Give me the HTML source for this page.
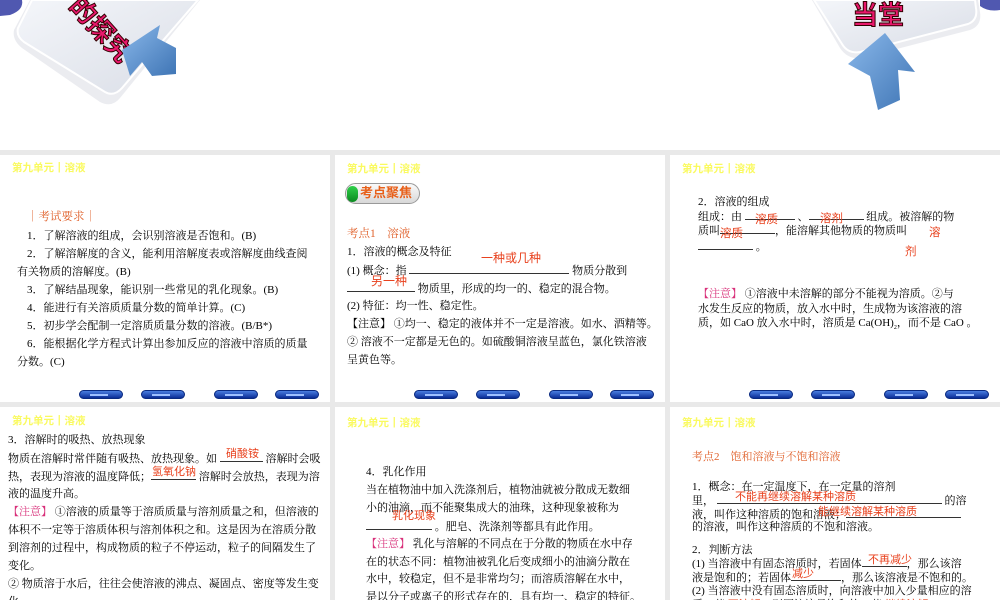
<!DOCTYPE html>
<html><head><meta charset="utf-8"><style>
*{margin:0;padding:0;box-sizing:border-box}
body{width:1000px;height:600px;overflow:hidden;background:#e9e9e9;position:relative;font-family:"Liberation Serif","Noto Serif CJK SC",serif;font-size:11px;color:#000}
.top{position:absolute;left:0;top:0;width:1000px;height:150px;background:#fff}
.p{position:absolute;background:#fff;overflow:hidden}
.l{position:absolute;white-space:nowrap;line-height:14px}
.h{color:#fafa60;font-family:"Liberation Sans","Noto Sans CJK SC",sans-serif;font-size:10.5px;font-weight:bold}
.o{color:#e0602a}
.r{color:#e8401c;font-family:"Liberation Sans","Noto Sans CJK SC",sans-serif}
.m{color:#d8307a}
.u{display:inline-block;border-bottom:1px solid #333;height:11px;vertical-align:baseline}
.b{position:absolute;top:235px;width:44px;height:9px;border-radius:5px;background:linear-gradient(#4a7ee0,#0a2c96);border:1px solid #0a2a80}
.b:after{content:"";position:absolute;left:10px;top:3px;width:18px;height:2px;background:#9ec0ff}
</style></head><body>
<div class="top">
<svg width="1000" height="150" style="position:absolute;left:0;top:0">
<defs><linearGradient id="t" x1="0" y1="0" x2="1" y2="1"><stop offset="0" stop-color="#f4f6fa"/><stop offset="1" stop-color="#d9dde6"/></linearGradient>
<linearGradient id="a" x1="0" y1="0" x2="1" y2="1"><stop offset="0" stop-color="#8ab8ea"/><stop offset="1" stop-color="#3f75b5"/></linearGradient></defs>
<path d="M30 0 L14 30 Q12 40 22 48 L100 102 Q112 108 120 98 L200 0 Z" fill="#e2e4ea" opacity=".7"/>
<path d="M32 0 L18 28 Q16 36 24 42 L105 92 Q114 97 122 88 L198 0 Z" fill="url(#t)" stroke="#fff" stroke-width="2"/>
<path d="M0 0 L22 0 Q24 10 10 15 L0 16 Z" fill="#5058b0"/>
<text x="62" y="20" transform="rotate(48 80 20)" font-family="Liberation Sans,Noto Sans CJK SC,sans-serif" font-size="26" font-weight="bold" fill="#e8186c" stroke="#300" stroke-width="1">的探究</text>
<path d="M122 50 L160 25 L157 38 L176 48 L176 74 L152 76 L142 62 L130 76 Z" fill="url(#a)"/>
<path d="M812 0 L840 48 Q848 60 862 58 L970 30 Q982 26 980 12 L978 0 Z" fill="#e2e4ea" opacity=".7"/>
<path d="M814 0 L842 44 Q848 54 860 52 L968 24 Q978 20 976 8 L975 0 Z" fill="url(#t)" stroke="#fff" stroke-width="2"/>
<path d="M980 0 L1000 0 L1000 10 Q988 12 980 6 Z" fill="#5058b0"/>
<text x="852" y="24" font-family="Liberation Sans,Noto Sans CJK SC,sans-serif" font-size="26" font-weight="bold" fill="#e8186c" stroke="#300" stroke-width="1">当堂</text>
<path d="M885 33 L915 72 L898 70 L900 100 L878 110 L870 76 L848 64 Z" fill="url(#a)"/>
</svg>
</div>

<div class="p" style="left:0;top:155px;width:330px;height:247px">
<div class="l h" style="left:12px;top:6px">第九单元┃溶液</div>
<div class="l o" style="left:27px;top:55px;font-size:11.5px">｜考试要求｜</div>
<div class="l" style="left:27px;top:74px">1．了解溶液的组成，会识别溶液是否饱和。(B)</div>
<div class="l" style="left:27px;top:92px">2．了解溶解度的含义，能利用溶解度表或溶解度曲线查阅</div>
<div class="l" style="left:17px;top:110px">有关物质的溶解度。(B)</div>
<div class="l" style="left:27px;top:128px">3．了解结晶现象，能识别一些常见的乳化现象。(B)</div>
<div class="l" style="left:27px;top:146px">4．能进行有关溶质质量分数的简单计算。(C)</div>
<div class="l" style="left:27px;top:164px">5．初步学会配制一定溶质质量分数的溶液。(B/B*)</div>
<div class="l" style="left:27px;top:182px">6．能根据化学方程式计算出参加反应的溶液中溶质的质量</div>
<div class="l" style="left:17px;top:200px">分数。(C)</div>
<div class="b" style="left:79px"></div><div class="b" style="left:141px"></div><div class="b" style="left:214px"></div><div class="b" style="left:275px"></div>
</div>

<div class="p" style="left:335px;top:155px;width:330px;height:247px">
<div class="l h" style="left:12px;top:7px">第九单元┃溶液</div>
<div style="position:absolute;left:10px;top:28px;width:75px;height:21px;border-radius:11px;background:linear-gradient(#fafafa,#d8d8d8);border:1px solid #999"></div>
<div style="position:absolute;left:12px;top:31px;width:11px;height:16px;border-radius:6px;background:linear-gradient(#2fd04a,#0a8a20)"></div>
<div class="l" style="left:25px;top:31px;color:#e8601a;font-family:'Liberation Sans','Noto Sans CJK SC',sans-serif;font-weight:bold;font-size:13px">考点聚焦</div>
<div class="l o" style="left:12px;top:72px;font-size:11.5px">考点1　溶液</div>
<div class="l" style="left:12px;top:90px">1．溶液的概念及特征</div>
<div class="l r" style="left:146px;top:96px;font-size:12px">一种或几种</div>
<div class="l" style="left:12px;top:108px">(1) 概念：指 <span class="u" style="width:160px"></span> 物质分散到</div>
<div class="l r" style="left:36px;top:119px;font-size:12px">另一种</div>
<div class="l" style="left:12px;top:126px"><span class="u" style="width:68px"></span> 物质里，形成的均一的、稳定的混合物。</div>
<div class="l" style="left:12px;top:144px">(2) 特征：均一性、稳定性。</div>
<div class="l" style="left:12px;top:162px">【注意】 ①均一、稳定的液体并不一定是溶液。如水、酒精等。</div>
<div class="l" style="left:12px;top:180px">② 溶液不一定都是无色的。如硫酸铜溶液呈蓝色，氯化铁溶液</div>
<div class="l" style="left:12px;top:198px">呈黄色等。</div>
<div class="b" style="left:79px"></div><div class="b" style="left:141px"></div><div class="b" style="left:214px"></div><div class="b" style="left:275px"></div>
</div>

<div class="p" style="left:670px;top:155px;width:330px;height:247px">
<div class="l h" style="left:12px;top:7px">第九单元┃溶液</div>
<div class="l" style="left:28px;top:40px">2．溶液的组成</div>
<div class="l" style="left:28px;top:54px">组成：由 <span class="u" style="width:50px"></span> 、<span class="u" style="width:55px"></span> 组成。被溶解的物</div>
<div class="l r" style="left:85px;top:58px;font-size:11.5px">溶质</div>
<div class="l r" style="left:150px;top:57px;font-size:11.5px">溶剂</div>
<div class="l" style="left:28px;top:68px">质叫<span class="u" style="width:55px"></span>，能溶解其他物质的物质叫</div>
<div class="l r" style="left:50px;top:72px;font-size:11.5px">溶质</div>
<div class="l" style="left:28px;top:84px"><span class="u" style="width:55px"></span> 。</div>
<div class="l r" style="left:259px;top:71px;font-size:11.5px">溶</div>
<div class="l r" style="left:235px;top:90px;font-size:11.5px">剂</div>
<div class="l" style="left:28px;top:132px"><span class="m">【注意】</span> ①溶液中未溶解的部分不能视为溶质。②与</div>
<div class="l" style="left:28px;top:147px">水发生反应的物质，放入水中时，生成物为该溶液的溶</div>
<div class="l" style="left:28px;top:161px">质，如 CaO 放入水中时，溶质是 Ca(OH)<sub style="font-size:6px">2</sub>，而不是 CaO 。</div>
<div class="b" style="left:79px"></div><div class="b" style="left:141px"></div><div class="b" style="left:214px"></div><div class="b" style="left:275px"></div>
</div>

<div class="p" style="left:0;top:407px;width:330px;height:193px">
<div class="l h" style="left:12px;top:7px">第九单元┃溶液</div>
<div class="l" style="left:8px;top:26px">3．溶解时的吸热、放热现象</div>
<div class="l" style="left:8px;top:44px">物质在溶解时常伴随有吸热、放热现象。如 <span class="u" style="width:43px"></span> 溶解时会吸</div>
<div class="l r" style="left:226px;top:40px">硝酸铵</div>
<div class="l" style="left:8px;top:62px">热，表现为溶液的温度降低；<span class="u" style="width:45px"></span> 溶解时会放热，表现为溶</div>
<div class="l r" style="left:152px;top:58px">氢氧化钠</div>
<div class="l" style="left:8px;top:80px">液的温度升高。</div>
<div class="l" style="left:8px;top:98px"><span class="m">【注意】</span> ①溶液的质量等于溶质质量与溶剂质量之和，但溶液的</div>
<div class="l" style="left:8px;top:116px">体积不一定等于溶质体积与溶剂体积之和。这是因为在溶质分散</div>
<div class="l" style="left:8px;top:134px">到溶剂的过程中，构成物质的粒子不停运动，粒子的间隔发生了</div>
<div class="l" style="left:8px;top:152px">变化。</div>
<div class="l" style="left:8px;top:170px">② 物质溶于水后，往往会使溶液的沸点、凝固点、密度等发生变</div>
<div class="l" style="left:8px;top:188px">化。</div>
</div>

<div class="p" style="left:335px;top:407px;width:330px;height:193px">
<div class="l h" style="left:12px;top:9px">第九单元┃溶液</div>
<div class="l" style="left:31px;top:58px">4．乳化作用</div>
<div class="l" style="left:31px;top:76px">当在植物油中加入洗涤剂后，植物油就被分散成无数细</div>
<div class="l" style="left:31px;top:94px">小的油滴，而不能聚集成大的油珠，这种现象被称为</div>
<div class="l r" style="left:57px;top:102px">乳化现象</div>
<div class="l" style="left:31px;top:112px"><span class="u" style="width:66px"></span> 。肥皂、洗涤剂等都具有此作用。</div>
<div class="l" style="left:31px;top:130px"><span class="m">【注意】</span> 乳化与溶解的不同点在于分散的物质在水中存</div>
<div class="l" style="left:31px;top:148px">在的状态不同：植物油被乳化后变成细小的油滴分散在</div>
<div class="l" style="left:31px;top:165px">水中，较稳定，但不是非常均匀；而溶质溶解在水中，</div>
<div class="l" style="left:31px;top:183px">是以分子或离子的形式存在的，具有均一、稳定的特征。</div>
</div>

<div class="p" style="left:670px;top:407px;width:330px;height:193px">
<div class="l h" style="left:12px;top:9px">第九单元┃溶液</div>
<div class="l o" style="left:22px;top:43px">考点2　饱和溶液与不饱和溶液</div>
<div class="l" style="left:22px;top:73px">1．概念：在一定温度下，在一定量的溶剂</div>
<div class="l" style="left:22px;top:86px">里， <span class="u" style="width:225px"></span> 的溶</div>
<div class="l r" style="left:65px;top:83px">不能再继续溶解某种溶质</div>
<div class="l" style="left:22px;top:100px">液，叫作这种溶质的饱和溶液；<span class="u" style="width:115px"></span></div>
<div class="l r" style="left:148px;top:98px">能继续溶解某种溶质</div>
<div class="l" style="left:22px;top:113px">的溶液，叫作这种溶质的不饱和溶液。</div>
<div class="l" style="left:22px;top:136px">2．判断方法</div>
<div class="l" style="left:22px;top:149px">(1) 当溶液中有固态溶质时，若固体<span class="u" style="width:45px"></span>，那么该溶</div>
<div class="l r" style="left:198px;top:146px">不再减少</div>
<div class="l" style="left:22px;top:163px">液是饱和的；若固体<span class="u" style="width:50px"></span>，那么该溶液是不饱和的。</div>
<div class="l r" style="left:122px;top:160px">减少</div>
<div class="l" style="left:22px;top:177px">(2) 当溶液中没有固态溶质时，向溶液中加入少量相应的溶</div>
<div class="l" style="left:22px;top:191px">质，若 <span class="r">不溶解</span>，则原溶液是饱和的；若 <span class="r">继续溶解</span></div>
</div>
</body></html>
